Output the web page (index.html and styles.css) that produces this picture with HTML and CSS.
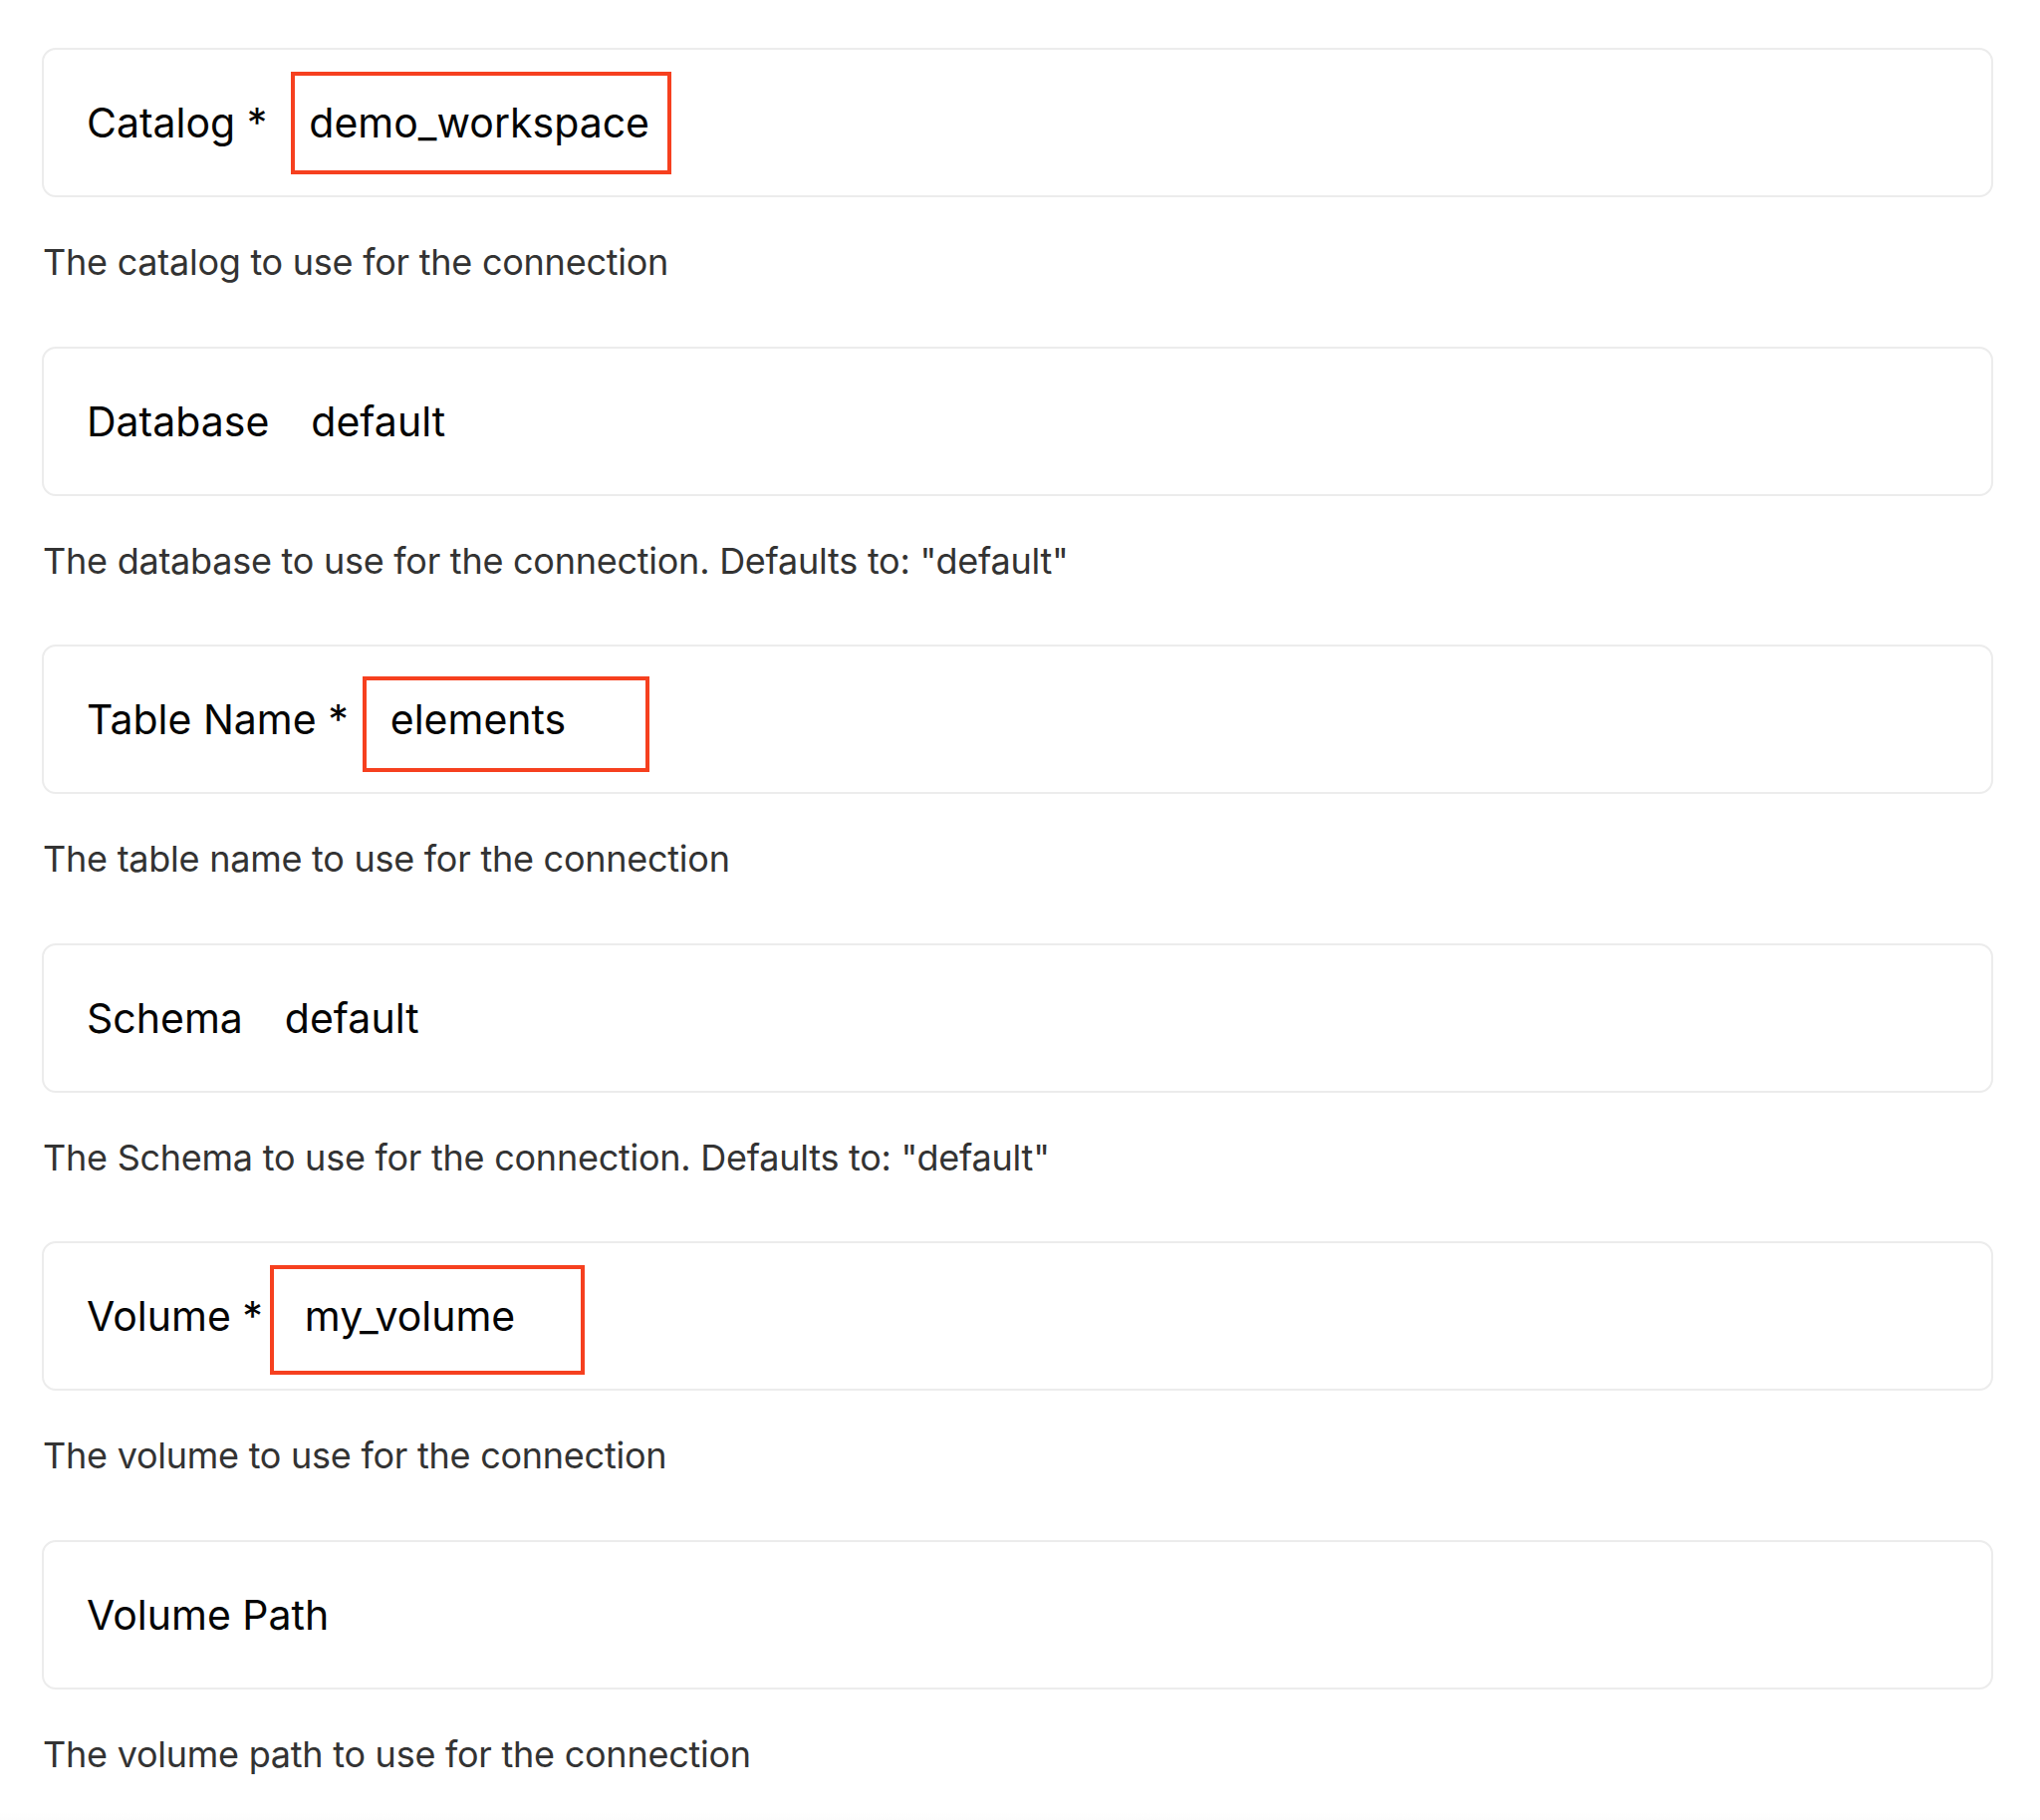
FILE: index.html
```html
<!DOCTYPE html>
<html lang="en">
<head>
  <meta charset="UTF-8" />
  <meta name="viewport" content="width=device-width, initial-scale=1" />
  <title>Connection settings</title>
  <link rel="stylesheet" href="styles.css">
</head>
<body>
  <div class="form">
    <div class="field">
      <div class="card">
        <span class="label">Catalog *</span>
        <span class="value mark mark-catalog">demo_workspace</span>
      </div>
      <p class="hint">The catalog to use for the connection</p>
    </div>

    <div class="field">
      <div class="card">
        <span class="label">Database</span>
        <span class="value">default</span>
      </div>
      <p class="hint">The database to use for the connection. Defaults to: "default"</p>
    </div>

    <div class="field">
      <div class="card">
        <span class="label">Table Name *</span>
        <span class="value mark mark-table">elements</span>
      </div>
      <p class="hint">The table name to use for the connection</p>
    </div>

    <div class="field">
      <div class="card">
        <span class="label">Schema</span>
        <span class="value">default</span>
      </div>
      <p class="hint">The Schema to use for the connection. Defaults to: "default"</p>
    </div>

    <div class="field">
      <div class="card">
        <span class="label">Volume *</span>
        <span class="value mark mark-volume">my_volume</span>
      </div>
      <p class="hint">The volume to use for the connection</p>
    </div>

    <div class="field">
      <div class="card">
        <span class="label">Volume Path</span>
      </div>
      <p class="hint">The volume path to use for the connection</p>
    </div>
  </div>
  <div class="fade"></div>
</body>
</html>
```

FILE: styles.css
```css
body {
  margin: 0;
  padding: 0;
  background: #fff;
  font-family: Inter, "Noto Sans", sans-serif;
  color: #050505;
}
.form {
  padding: 48px 47px 0 42px;
}
.card {
  box-sizing: border-box;
  height: 150px;
  border: 2px solid #ececec;
  border-radius: 14px;
  background: #fff;
  display: flex;
  align-items: center;
  gap: 42px;
  padding-left: 43px;
}
.label, .value {
  font-size: 41px;
  line-height: 50px;
  color: #050505;
}
.value {
  position: relative;
}
.mark::after {
  content: "";
  position: absolute;
  box-sizing: border-box;
  border: 4px solid #f6401f;
}
.mark-catalog::after {
  left: -18px;
  top: -26px;
  width: 382px;
  height: 103px;
}
.mark-table::after {
  left: -28px;
  top: -18px;
  width: 288px;
  height: 96px;
}
.mark-volume::after {
  left: -35px;
  top: -26px;
  width: 316px;
  height: 110px;
}
.hint {
  margin: 40px 0 59.5px 1px;
  font-size: 36px;
  letter-spacing: -0.25px;
  line-height: 50px;
  color: #333;
}
.fade {
  height: 40px;
  margin-top: -26px;
  background: linear-gradient(to bottom, #fff, #f4f4f4);
}
```
